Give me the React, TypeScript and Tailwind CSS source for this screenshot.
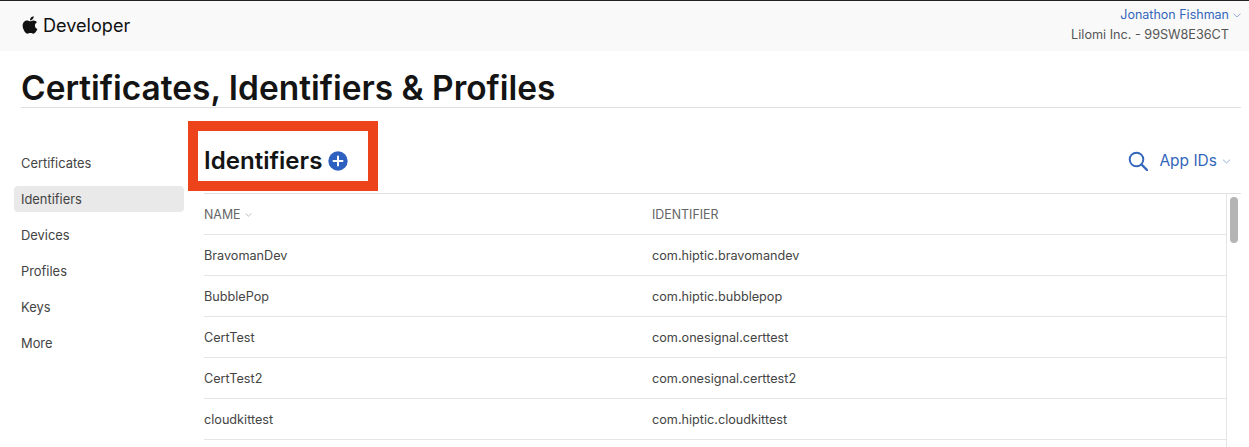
const rows = [
  ["BravomanDev", "com.hiptic.bravomandev"],
  ["BubblePop", "com.hiptic.bubblepop"],
  ["CertTest", "com.onesignal.certtest"],
  ["CertTest2", "com.onesignal.certtest2"],
  ["cloudkittest", "com.hiptic.cloudkittest"],
];
const nav = ["Certificates", "Identifiers", "Devices", "Profiles", "Keys", "More"];

function Chevron({ className }: { className: string }) {
  return (
    <svg viewBox="0 0 8 5" fill="none" stroke="currentColor" strokeWidth="0.8" className={className}>
      <path d="M0.5 0.7 L4 4 L7.5 0.7" />
    </svg>
  );
}

function Apple() {
  return (
    <svg viewBox="0 0 384 512" fill="#111" className="w-[16px] h-[20px]">
      <path d="M318.7 268.7c-.2-36.7 16.4-64.4 50-84.8-18.8-26.9-47.2-41.7-84.7-44.6-35.5-2.8-74.3 20.7-88.5 20.7-15 0-49.4-19.7-76.4-19.7C63.3 141.2 4 184.8 4 273.5q0 39.3 14.4 81.2c12.8 36.7 59 126.7 107.2 125.2 25.2-.6 43-17.9 75.8-17.9 31.8 0 48.3 17.9 76.4 17.9 48.6-.7 90.4-82.5 102.6-119.3-65.2-30.7-61.7-90-61.7-91.9zm-56.6-164.2c27.3-32.4 24.8-61.9 24-72.5-24.1 1.4-52 16.4-67.9 34.9-17.5 19.8-27.8 44.3-25.6 71.9 26.1 2 49.9-11.4 69.5-34.3z" />
    </svg>
  );
}

export default function App() {
  return (
    <div className="relative h-[447px] w-[1249px] overflow-hidden bg-white font-['Inter',sans-serif] text-[#333]">
      <header className="flex h-[51px] items-start justify-between border-t border-t-[#222] bg-[#f9f9f9] pl-[22px] pr-[8px]">
        <div className="mt-[12px] flex items-center gap-[5px]">
          <Apple />
          <span className="text-[18.1px] leading-[24px] text-[#111]">Developer</span>
        </div>
        <div className="flex flex-col items-end pt-[4px] text-[12.5px] leading-[20px]">
          <div className="flex items-center gap-[4px] text-[#3366bb]">
            <span>Jonathon Fishman</span>
            <Chevron className="h-[5px] w-[8px] text-[#7d9ad0]" />
          </div>
          <div className="mr-[12px] text-[12.65px] text-[#555]">Lilomi Inc. - 99SW8E36CT</div>
        </div>
      </header>

      <div className="ml-[21px] mr-[8px] flex h-[57px] items-end border-b border-[#e0e0e0] pb-[1px]">
        <h1 className="text-[33.45px] font-semibold leading-[36px] text-[#141414]">
          Certificates, Identifiers &amp; Profiles
        </h1>
      </div>

      <div className="flex">
        <nav className="ml-[14px] mt-[42px] flex w-[170px] flex-col gap-[10px]">
          {nav.map((n) => (
            <div
              key={n}
              className={`h-[26px] rounded-[4px] pl-[7px] text-[12.9px] leading-[28px] text-[#444] ${
                n === "Identifiers" ? "bg-[#e9e9e9]" : ""
              }`}
            >
              {n}
            </div>
          ))}
        </nav>

        <main className="ml-[20px] mr-[8px] flex-1">
          <div className="flex h-[85px] items-center justify-between pt-[21px]">
            <div className="flex items-center gap-[6px]">
              <h2 className="text-[24.1px] font-semibold leading-[28px] text-[#141414]">Identifiers</h2>
              <svg viewBox="0 0 20 20" className="h-[20px] w-[20px]">
                <circle cx="10" cy="10" r="9.7" fill="#2e60bf" />
                <path d="M10 5.5v9M5.5 10h9" stroke="#fff" strokeWidth="2" strokeLinecap="round" />
              </svg>
            </div>
            <div className="mr-[10px] flex items-center text-[#3366bb]">
              <svg viewBox="0 0 20 20" fill="none" stroke="currentColor" className="mr-[11px] h-[20px] w-[20px]">
                <circle cx="8.5" cy="8.5" r="6.8" strokeWidth="1.9" />
                <path d="M13.5 13.5 L19 19" strokeWidth="2.4" strokeLinecap="round" />
              </svg>
              <span className="text-[15.5px] leading-[24px]">App IDs</span>
              <Chevron className="ml-[5px] h-[5px] w-[9px] text-[#7d9ad0]" />
            </div>
          </div>

          <div className="flex h-[254px] border-t border-[#e0e0e0]">
            <div className="flex-1">
              <div className="flex h-[41px] items-center border-b border-[#e5e5e5] pt-[2px] text-[12.4px] text-[#666]">
                <div className="flex w-[448px] items-center gap-[4px]">
                  NAME
                  <Chevron className="h-[4px] w-[7px] text-[#999]" />
                </div>
                <div>IDENTIFIER</div>
              </div>
              {rows.map(([a, b]) => (
                <div
                  key={a}
                  className="flex h-[41px] items-center border-b border-[#e5e5e5] text-[12.67px] text-[#444]"
                >
                  <div className="w-[448px]">{a}</div>
                  <div>{b}</div>
                </div>
              ))}
            </div>
            <div className="w-[15px] border-l border-[#e5e5e5] pl-[3px] pt-[3px]">
              <div className="h-[46px] w-[8px] rounded-full bg-[#b5b5b5]" />
            </div>
          </div>
        </main>
      </div>

      <div className="absolute left-[188px] top-[121px] h-[70px] w-[190px] border-[10px] border-[#ec431b]" />
    </div>
  );
}
